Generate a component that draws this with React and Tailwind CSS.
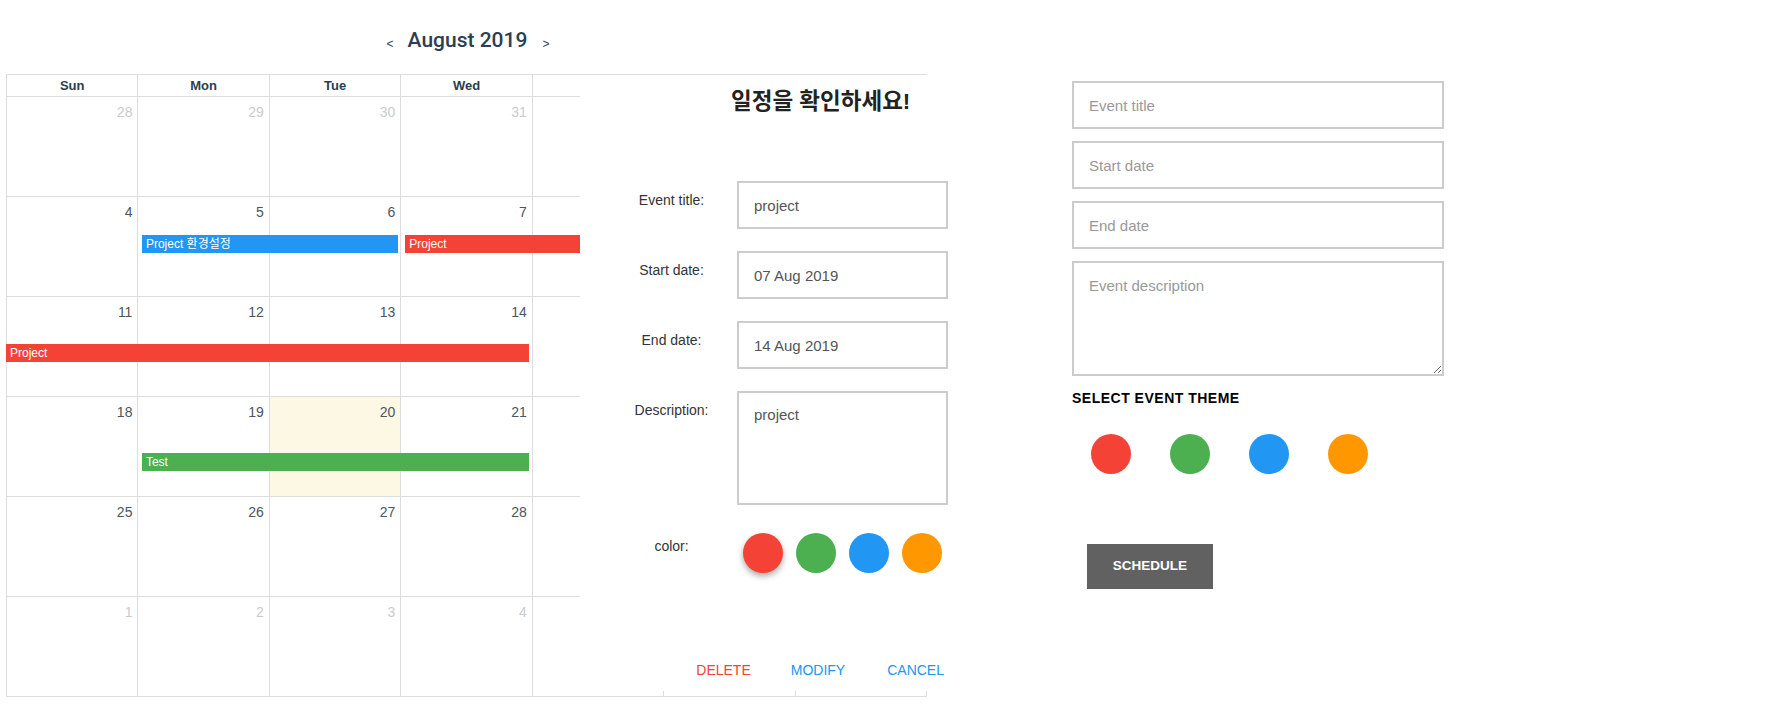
import React from 'react';

const FONT = { fontFamily: '"Liberation Sans", "Noto Sans CJK KR", Arial, sans-serif' };

const weeks = [
  [[28, 1], [29, 1], [30, 1], [31, 1], [1], [2], [3]],
  [[4], [5], [6], [7], [8], [9], [10]],
  [[11], [12], [13], [14], [15], [16], [17]],
  [[18], [19], [20, 0, 1], [21], [22], [23], [24]],
  [[25], [26], [27], [28], [29], [30], [31]],
  [[1, 1], [2, 1], [3, 1], [4, 1], [5, 1], [6, 1], [7, 1]],
];

// week index -> bars (grid placement written out so tailwind picks them up)
const bars = {
  1: [
    { title: 'Project 환경설정', cls: 'col-start-2 col-span-2 ml-[3.5px] mt-[38px] bg-[#2196f3]' },
    { title: 'Project', cls: 'col-start-4 col-span-4 ml-[4px] mt-[38px] bg-[#f44336]' },
  ],
  2: [{ title: 'Project', cls: 'col-start-1 col-span-4 -ml-px mt-[47px] bg-[#f44336]' }],
  3: [{ title: 'Test', cls: 'col-start-2 col-span-3 ml-[3.5px] mt-[56px] bg-[#4caf50]' }],
};

const days = ['Sun', 'Mon', 'Tue', 'Wed', 'Thu', 'Fri', 'Sat'];
const colStart = ['col-start-1', 'col-start-2', 'col-start-3', 'col-start-4', 'col-start-5', 'col-start-6', 'col-start-7'];
const swatches = ['bg-[#f44336]', 'bg-[#4caf50]', 'bg-[#2196f3]', 'bg-[#ff9800]'];

function Calendar() {
  return (
    <div className="ml-[6px] w-[921px] border-l border-t border-[#ddd]">
      <div className="grid grid-cols-7">
        {days.map(d => (
          <div key={d} className="h-[22px] border-r border-b border-[#ddd] flex items-center justify-center text-[13px] font-bold text-[#2c3e50]">{d}</div>
        ))}
      </div>
      {weeks.map((w, wi) => (
        <div key={wi} className="grid grid-cols-7 grid-rows-1 h-[100px]">
          {w.map(([n, other, today], ci) => (
            <div
              key={ci}
              className={`row-start-1 ${colStart[ci]} border-r border-b border-[#ddd] text-right pr-[5px] pt-[5px] text-[14px] leading-[20px] ${other ? 'text-[#c8ccd1]' : 'text-[#4a5562]'} ${today ? 'bg-[#fcf8e3]' : ''}`}
            >
              {n}
            </div>
          ))}
          {(bars[wi] || []).map((b, i) => (
            <div key={i} className={`row-start-1 self-start z-10 h-[18px] mr-[3.5px] pl-[4px] text-[12px] leading-[18px] text-white whitespace-nowrap overflow-hidden ${b.cls}`}>
              {b.title}
            </div>
          ))}
        </div>
      ))}
    </div>
  );
}

function Dialog() {
  const rows = [
    ['Event title:', 'project'],
    ['Start date:', '07 Aug 2019'],
    ['End date:', '14 Aug 2019'],
  ];
  return (
    <div className="absolute left-[580px] top-[75px] z-20 w-[390px] h-[616px] bg-white">
      <div className="pl-[151px] pt-[12px] text-[22.5px] leading-[30px] font-bold text-[#222] whitespace-nowrap">일정을 확인하세요!</div>
      <div className="mt-[64px] flex flex-col gap-[22px]">
        {rows.map(([label, val]) => (
          <div key={label} className="flex">
            <div className="ml-[26px] w-[131px] text-center text-[14px] leading-[18px] pt-[10px] text-[#333]">{label}</div>
            <input readOnly value={val} className="w-[211px] h-[48px] border-2 border-[#ccc] px-[15px] text-[15px] text-[#555] outline-none" />
          </div>
        ))}
        <div className="flex">
          <div className="ml-[26px] w-[131px] text-center text-[14px] leading-[18px] pt-[10px] text-[#333]">Description:</div>
          <textarea readOnly value="project" className="w-[211px] h-[114px] border-2 border-[#ccc] px-[15px] pt-[13px] text-[15px] leading-[18px] text-[#555] outline-none resize-none" />
        </div>
      </div>
      <div className="mt-[28px] flex">
        <div className="ml-[26px] w-[131px] text-center text-[14px] leading-[18px] pt-[4px] text-[#333]">color:</div>
        <div className="ml-[6px] flex gap-[13px]">
          {swatches.map((c, i) => (
            <div key={c} className={`w-[40px] h-[40px] rounded-full ${c} ${i === 0 ? 'shadow-[0_3px_6px_rgba(0,0,0,0.35)]' : ''}`} />
          ))}
        </div>
      </div>
      <div className="mt-[87px] pr-[26px] flex justify-end text-[14px] leading-[20px]">
        <span className="text-[#f44336]">DELETE</span>
        <span className="ml-[40px] text-[#2196f3]">MODIFY</span>
        <span className="ml-[42px] text-[#2196f3]">CANCEL</span>
      </div>
    </div>
  );
}

function NewEventForm() {
  const field = 'w-[372px] h-[48px] border-2 border-[#ccc] px-[15px] text-[15px] text-[#555] placeholder:text-[#999] outline-none';
  return (
    <div className="ml-[146px] mt-[81px] w-[372px]">
      <div className="flex flex-col gap-[12px]">
        <input className={field} placeholder="Event title" />
        <input className={field} placeholder="Start date" />
        <input className={field} placeholder="End date" />
        <textarea className="w-[372px] h-[115px] border-2 border-[#ccc] px-[15px] pt-[14px] text-[15px] leading-[18px] text-[#555] placeholder:text-[#999] outline-none" placeholder="Event description" />
      </div>
      <div className="mt-[14px] text-[14px] leading-[16px] font-bold tracking-[0.5px] text-black">SELECT EVENT THEME</div>
      <div className="mt-[28px] ml-[19px] flex gap-[39px]">
        {swatches.map(c => <div key={c} className={`w-[40px] h-[40px] rounded-full ${c}`} />)}
      </div>
      <button className="mt-[70px] ml-[15px] w-[126px] h-[45px] bg-[#616161] text-white text-[13.5px] font-bold">SCHEDULE</button>
    </div>
  );
}

export default function App() {
  return (
    <div className="w-[1775px] h-[705px] bg-white flex" style={FONT}>
      <div className="relative w-[926px]">
        <div className="h-[74px] pt-[8px] pl-[10px] flex items-center justify-center text-[#2c3e50]">
          <span className="text-[12px] mt-[5px]">&lt;</span>
          <span className="ml-[14px] mr-[15px] text-[21px] font-medium" style={{ fontFamily: 'Roboto, sans-serif' }}>August 2019</span>
          <span className="text-[12px] mt-[5px]">&gt;</span>
        </div>
        <Calendar />
        <Dialog />
      </div>
      <NewEventForm />
    </div>
  );
}
